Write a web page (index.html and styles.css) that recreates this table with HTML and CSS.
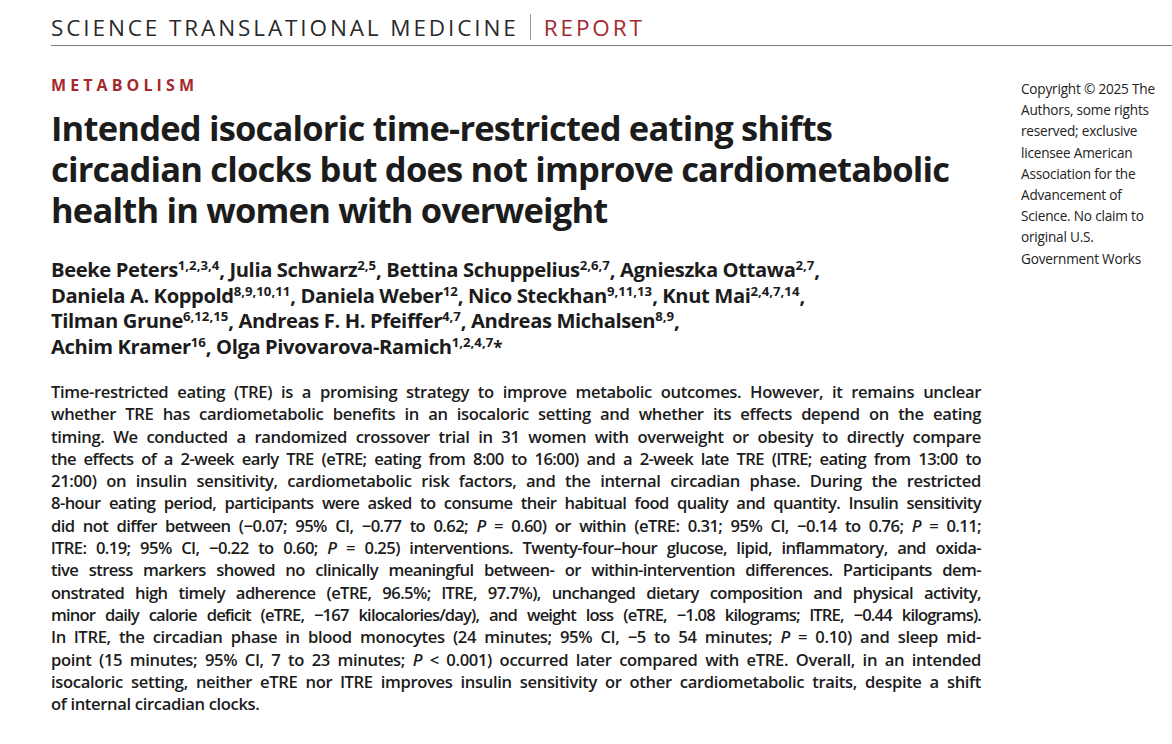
FILE: index.html
```html
<!DOCTYPE html>
<html lang="en">
<head>
<meta charset="utf-8">
<title>Science Translational Medicine | Report</title>
<link rel="stylesheet" href="styles.css">
</head>
<body>
<div class="page">
  <header class="masthead">
    <span class="journal">SCIENCE TRANSLATIONAL MEDICINE</span><span class="sep"></span><span class="type">REPORT</span>
  </header>
  <div class="top">
    <div class="main">
      <div class="section">METABOLISM</div>
      <h1 class="title">Intended isocaloric time-restricted eating shifts<br>circadian clocks but does not improve cardiometabolic<br>health in women with overweight</h1>
      <p class="authors">Beeke Peters<sup>1,2,3,4</sup>, Julia Schwarz<sup>2,5</sup>, Bettina Schuppelius<sup>2,6,7</sup>, Agnieszka Ottawa<sup>2,7</sup>,<br>Daniela A. Koppold<sup>8,9,10,11</sup>, Daniela Weber<sup>12</sup>, Nico Steckhan<sup>9,11,13</sup>, Knut Mai<sup>2,4,7,14</sup>,<br>Tilman Grune<sup>6,12,15</sup>, Andreas F. H. Pfeiffer<sup>4,7</sup>, Andreas Michalsen<sup>8,9</sup>,<br>Achim Kramer<sup>16</sup>, Olga Pivovarova-Ramich<sup>1,2,4,7</sup><span class="star">*</span></p>
    </div>
    <aside class="copyright">Copyright © 2025 The<br>Authors, some rights<br>reserved; exclusive<br>licensee American<br>Association for the<br>Advancement of<br>Science. No claim to<br>original U.S.<br>Government Works</aside>
  </div>
  <div class="abstract">
    <span class="ln">Time-restricted eating (TRE) is a promising strategy to improve metabolic outcomes. However, it remains unclear</span>
    <span class="ln">whether TRE has cardiometabolic benefits in an isocaloric setting and whether its effects depend on the eating</span>
    <span class="ln">timing. We conducted a randomized crossover trial in 31 women with overweight or obesity to directly compare</span>
    <span class="ln tight">the effects of a 2-week early TRE (eTRE; eating from 8:00 to 16:00) and a 2-week late TRE (lTRE; eating from 13:00 to</span>
    <span class="ln">21:00) on insulin sensitivity, cardiometabolic risk factors, and the internal circadian phase. During the restricted</span>
    <span class="ln tight">8-hour eating period, participants were asked to consume their habitual food quality and quantity. Insulin sensitivity</span>
    <span class="ln tight">did not differ between (−0.07; 95% CI, −0.77 to 0.62; <i>P</i> = 0.60) or within (eTRE: 0.31; 95% CI, −0.14 to 0.76; <i>P</i> = 0.11;</span>
    <span class="ln tight">lTRE: 0.19; 95% CI, −0.22 to 0.60; <i>P</i> = 0.25) interventions. Twenty-four–hour glucose, lipid, inflammatory, and oxida-</span>
    <span class="ln tight">tive stress markers showed no clinically meaningful between- or within-intervention differences. Participants dem-</span>
    <span class="ln tight">onstrated high timely adherence (eTRE, 96.5%; lTRE, 97.7%), unchanged dietary composition and physical activity,</span>
    <span class="ln tighter">minor daily calorie deficit (eTRE, −167 kilocalories/day), and weight loss (eTRE, −1.08 kilograms; lTRE, −0.44 kilograms).</span>
    <span class="ln">In lTRE, the circadian phase in blood monocytes (24 minutes; 95% CI, −5 to 54 minutes; <i>P</i> = 0.10) and sleep mid-</span>
    <span class="ln">point (15 minutes; 95% CI, 7 to 23 minutes; <i>P</i> &lt; 0.001) occurred later compared with eTRE. Overall, in an intended</span>
    <span class="ln">isocaloric setting, neither eTRE nor lTRE improves insulin sensitivity or other cardiometabolic traits, despite a shift</span>
    <span class="ln last">of internal circadian clocks.</span>
  </div>
</div>
</body>
</html>
```
FILE: styles.css
```css
html, body {
  margin: 0;
  padding: 0;
  background: #ffffff;
}
body {
  font-family: "Open Sans", "Liberation Sans", sans-serif;
  color: #1e1e1e;
}
.page {
  padding-left: 51px;
}
.masthead {
  display: flex;
  align-items: center;
  height: 46px;
  box-sizing: border-box;
  padding-top: 9px;
  border-bottom: 1.5px solid #7b7b7b;
  font-size: 22.5px;
  letter-spacing: 2.9px;
  font-weight: 400;
  color: #2a2a2a;
}
.sep {
  width: 1px;
  height: 26px;
  background: #999;
  margin: 0 13px 0 11px;
}
.type {
  color: #a4282d;
}
.top {
  display: flex;
  align-items: flex-start;
}
.main {
  flex: 1;
}
.section {
  margin-top: 29px;
  font-size: 16px;
  font-weight: 700;
  letter-spacing: 4.1px;
  color: #a4282d;
  line-height: 20px;
}
.title {
  margin: 12px 0 0;
  font-size: 34.5px;
  line-height: 41px;
  font-weight: 700;
  letter-spacing: -0.8px;
  color: #1c1c1c;
}
.authors {
  margin: 27px 0 0;
  font-size: 20.2px;
  line-height: 25.5px;
  font-weight: 700;
  letter-spacing: -0.4px;
  color: #1c1c1c;
}
.authors sup {
  font-size: 13.2px;
  line-height: 0;
  vertical-align: 0.52em;
  letter-spacing: 0;
}
.star {
  font-size: 17px;
}
.copyright {
  width: 136px;
  margin: 32px 15px 0 0;
  font-size: 13.6px;
  line-height: 21.2px;
  color: #222;
  letter-spacing: -0.2px;
}
.abstract {
  width: 930px;
  margin-top: 21px;
  font-size: 16.6px;
  line-height: 22.3px;
  font-weight: 600;
  letter-spacing: -0.35px;
  color: #1c1c1c;
}
.ln {
  display: block;
  text-align: justify;
  text-align-last: justify;
  white-space: nowrap;
}
.ln.tight {
  letter-spacing: -0.6px;
  word-spacing: -1px;
}
.ln.tighter {
  letter-spacing: -0.85px;
  word-spacing: -2px;
}
.ln.last {
  text-align-last: left;
}
```
